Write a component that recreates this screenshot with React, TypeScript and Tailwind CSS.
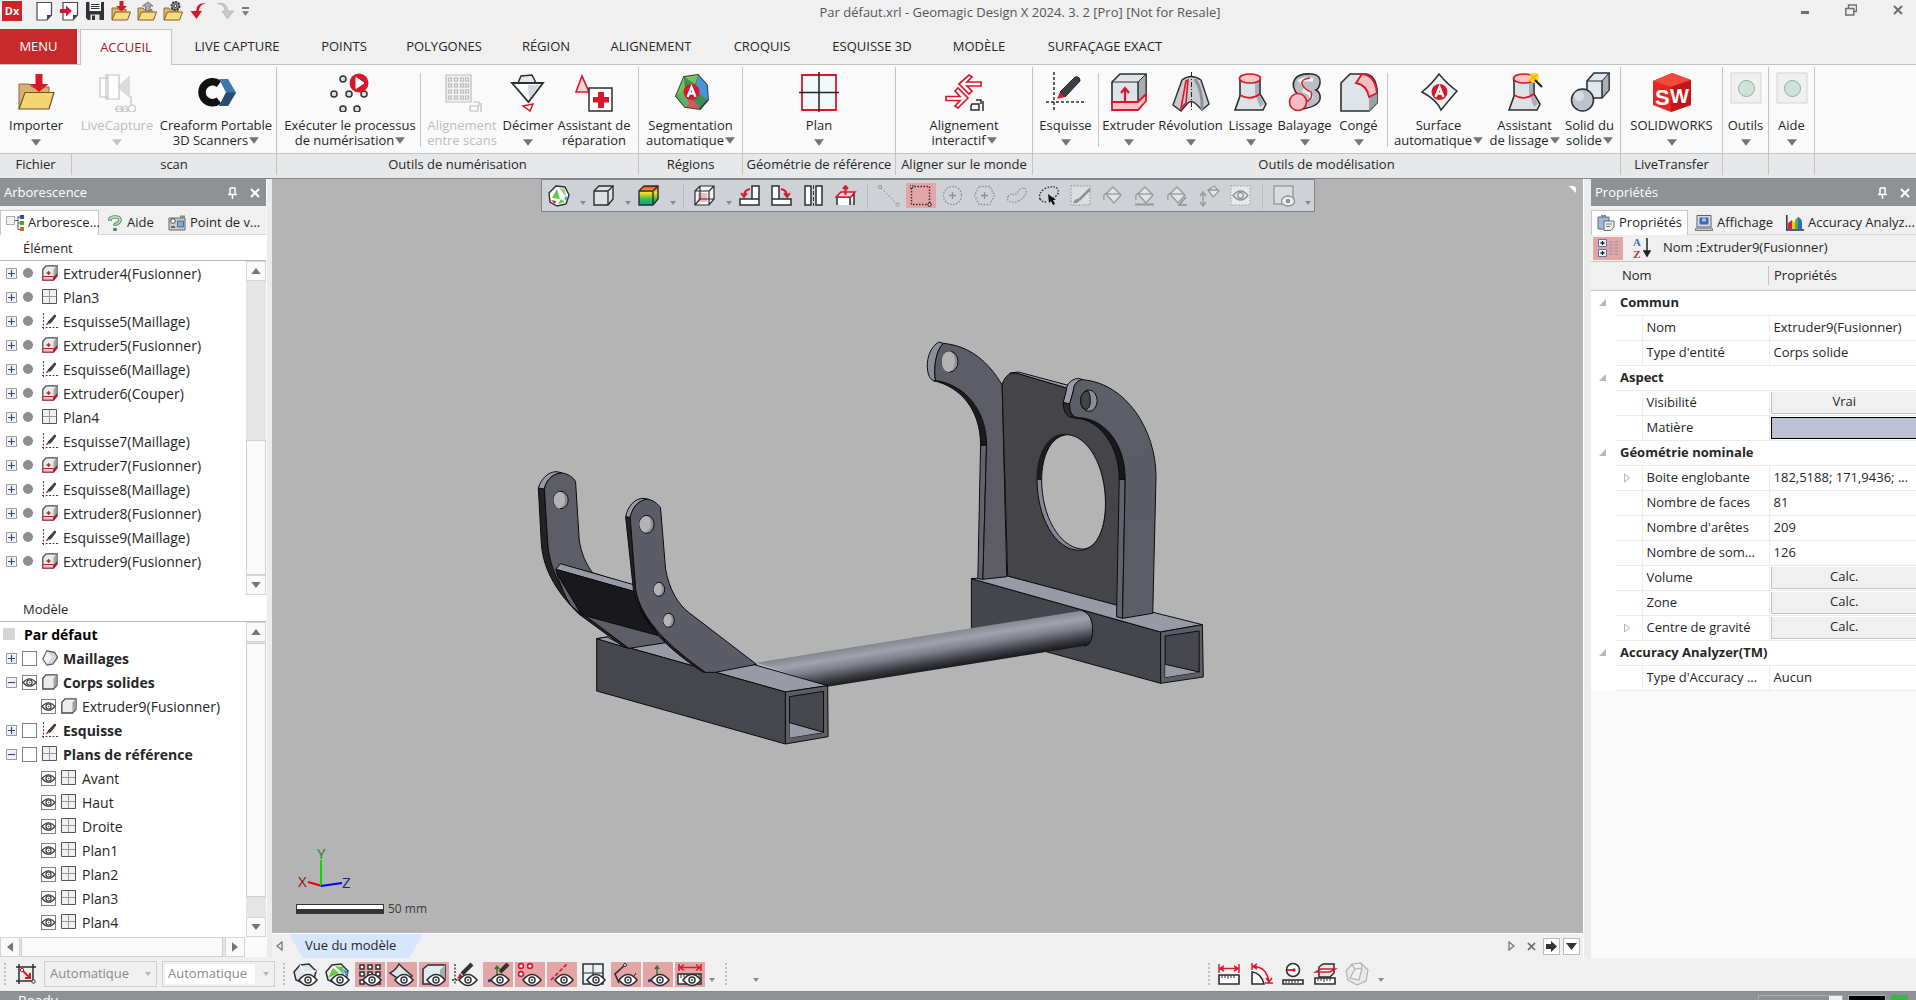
import { useState } from 'react'
import type { ReactNode } from 'react'

const INK = '#2b2e33'
const RED = '#d7182a'

// ---------- small shared pieces ----------

function Svg({ box, className, children }: { box: string; className: string; children: ReactNode }) {
  return (
    <svg viewBox={box} className={`shrink-0 ${className}`} fill="none" aria-hidden="true">
      {children}
    </svg>
  )
}

function Caret({ className = 'h-[7px] w-[11px] text-[#7a7a7a]' }: { className?: string }) {
  return (
    <Svg box="0 0 11 7" className={className}>
      <path d="M0 0h11L5.5 7z" fill="currentColor" />
    </Svg>
  )
}

function Grip() {
  return <span className="h-[22px] border-l-2 border-dotted border-[#c2c2c2]" />
}

// ---------- quick access icons (20x20) ----------

const Folder = () => (
  <>
    <path d="M1 19V7h5l1.5 1.5H15V12" fill="#dcb56c" stroke="#8a6a34" />
    <path d="M1 19 4.5 11H19.5L16.5 19z" fill="#f7dd7c" stroke="#7b5f2c" />
  </>
)

const Page = () => (
  <>
    <path d="M4 1.500H18.5V14L14 19H4z" fill="#fff" stroke="#4a4a4a" strokeWidth="1.2" />
    <path d="M14 19v-5h4.500z" fill="#444" />
  </>
)

const quickIcons: { label: string; icon: ReactNode }[] = [
  { label: 'Nouveau', icon: <Page /> },
  { label: 'Importer un fichier', icon: <><Page /><path d="M1 8h6V4.500l6 5.500-6 5.500V12H1z" fill={RED} /></> },
  {
    label: 'Enregistrer',
    icon: (
      <>
        <path d="M1 1h18v18H3l-2-2z" fill="#2f3237" />
        <path d="M4.500 1h11.500v9H4.500z" fill="#fff" />
        <path d="M6 3.500h8.500M6 5.500h8.500M6 7.500h8.500" stroke="#333" />
        <path d="M5.500 13.500h9V19h-9z" fill="#e4e4e4" />
        <path d="M7 14.500h3V19H7z" fill="#2f3237" />
      </>
    ),
  },
  { label: 'Ouvrir', icon: <><Folder /><path d="M8.500 0h4v5h3.500l-5.500 5.500L5 5h3.500z" fill={RED} /></> },
  { label: 'Exporter', icon: <><Folder /><path d="M8.500 10V5H5.500L11 1l5 4h-3v5z" fill="#a9adb1" stroke="#666" strokeWidth=".8" /></> },
  {
    label: 'Préférences',
    icon: (
      <>
        <Folder />
        <circle cx="12.5" cy="5" r="4" fill="#999" stroke="#333" strokeWidth="2" strokeDasharray="2 1" />
        <circle cx="12.5" cy="5" r="1.5" fill="#fff" stroke="#333" />
      </>
    ),
  },
  { label: 'Annuler', icon: <path d="M17.5 2.500C9 1 7.500 6 7.300 10H1.500l6 8 5.500-8H10c.3-4 2-7 7.500-7.500z" fill={RED} /> },
  { label: 'Rétablir', icon: <path d="M2.500 2.500C11 1 12.500 6 12.700 10h5.800l-6 8L7 10h3C9.700 6 8 3 2.500 2.500z" fill="#c9c9c9" stroke="#aaa" strokeWidth=".6" /> },
]

// ---------- ribbon icons (40x40) ----------

const facets = 'M13 5l14-2 9 10 1 15-8 9-15-2-9-11z'

const icons: Record<string, ReactNode> = {
  importer: (
    <>
      <path d="M3 37V12h10l3 3h17v6" fill="#d9b272" stroke="#8b6b3a" />
      <path d="M3 37 9 20.500h29L33 37z" fill="#f3d671" stroke="#6e5526" strokeWidth="1.2" />
      <path d="M19.500 2h7v10h6L23 20l-9.500-8h6z" fill={RED} />
    </>
  ),
  liveCapture: (
    <g stroke="#c4c4c4" strokeWidth="1.2">
      <path d="M22 13 33 3v23l-11-9z" fill="#dcdcdc" stroke="none" />
      <path d="M3 6h8v19H3zM9 3h13v24H9zM11 3v24" fill="#fff" />
      <path d="M34 24v10M18 37h14" />
      <circle cx="22" cy="37" r="3" /><circle cx="28" cy="37" r="3" /><circle cx="35" cy="36.5" r="3.5" />
    </g>
  ),
  creaform: (
    <>
      <path d="M23 28.500A10.500 10.500 0 1 1 23 12" stroke="#111" strokeWidth="7.5" />
      <path d="M23 7h9l8 13.500-8 13.500h-9l7-13.500z" fill="#3f77b0" />
      <path d="M23 34l7-13.500h10L32 34z" fill="#2a4d73" />
    </>
  ),
  processus: (
    <>
      {[[13, 7], [4, 22], [19, 22], [34, 22], [13, 37], [27, 37]].map(([x, y]) => (
        <circle key={`${x}-${y}`} cx={x} cy={y} r="3" fill="#d9e0e6" stroke="#333" strokeWidth="1.5" />
      ))}
      <circle cx="29" cy="11" r="9.5" fill={RED} />
      <path d="M26 5.500v11l8-5.500z" fill="#fff" stroke="#fff" />
    </>
  ),
  alignScans: (
    <g stroke="#bdbdbd" strokeWidth="1.2">
      <path d="M4 3h25v27H4z" fill="#f2f2f2" />
      {[7, 13, 19, 25].map((y) => [8, 14, 20, 25].map((x) => <rect key={`${x}-${y}`} x={x - 1.5} y={y - 1} width="3" height="3" />))}
      <path d="M28 34h8v5h-8zM31 30h6v4M39 31v9" />
    </g>
  ),
  decimer: (
    <>
      <path d="M10 11 13 4l11-1 4 8z" fill="#e3e9ee" stroke={INK} strokeWidth="1.5" />
      <path d="M4 11h31L20.500 30z" fill="#fff" stroke={INK} strokeWidth="1.8" />
      <path d="M20 13h12L21 27z" fill="#cfd6dc" />
      <path d="m15 34 10-2-3 7z" fill="#fff" stroke={RED} strokeWidth="1.5" />
    </>
  ),
  reparation: (
    <>
      <path d="M8 4 2 20h13z" fill="#f6d5d8" stroke={RED} strokeWidth="1.6" />
      <path d="M15 16h23v23H15z" fill="#fff" stroke={INK} strokeWidth="1.5" />
      <path d="M24 20h6v5h5v5.500h-5V36h-6v-5.500h-5V25h5z" fill={RED} />
    </>
  ),
  segmentation: (
    <>
      <path d={facets} fill="#3f8f55" stroke="#2b3a3a" strokeWidth="1.8" />
      <path d="m27 3 9 10 1 15-13-9z" fill="#4b92d6" />
      <path d="M13 5l14-2-3 9zM5 24l9-6-1-13z" fill="#75c25a" />
      <path d="m14 35 4-13 11 15z" fill="#d45b5b" />
      <path d="m5 24 9-6 4 14-4 3z" fill="#5db36b" />
      <circle cx="20.5" cy="20" r="8" fill={RED} />
      <path d="m16.500 25 4-10 4 10M18 21.500h5" stroke="#fff" strokeWidth="2.3" />
    </>
  ),
  plan: (
    <>
      <path d="M3 3h34v35H3z" fill="#f1f8fc" stroke={RED} strokeWidth="1.8" />
      <path d="M20 0v40M0 20.500h40" stroke="#222" strokeWidth="1.5" />
    </>
  ),
  interactif: (
    <>
      <g fill="#fff" stroke={RED} strokeWidth="1.7">
        <path d="m15 12 10-9 3 2-5 5h14v4H23l5 5-3 3z" />
        <path d="m24 26-10 10-3-2 5-5.500H2v-4h14l-5-5.500 3-3z" />
      </g>
      <path d="M28 32h7v6h-8v-4zM32 28h5v4M39 29v10" stroke={INK} strokeWidth="1.5" />
    </>
  ),
  esquisse: (
    <>
      <path d="M8 0v40M0 30h40" stroke={INK} strokeWidth="1.5" strokeDasharray="3 2" />
      <path d="m14 20 15-15q5-1 5 4L19 25z" fill="#3c3f45" stroke="#222" />
      <path d="m14 20-3 7 8-2z" fill={RED} />
    </>
  ),
  extruder: (
    <>
      <path d="M3 10 11 2h26v22l-8 8H3z" fill="#dfe4e8" stroke={INK} strokeWidth="1.6" />
      <path d="M29 10 37 2v22l-8 8z" fill="#a8aeb5" stroke={INK} />
      <path d="M3 10h26v22" stroke={INK} />
      <path d="M3 30h26l8-8v7l-8 9H3z" fill="#f7c4c8" stroke={RED} strokeWidth="1.8" />
      <path d="M16 29V18m-4 3 4-5 4 5" stroke={RED} strokeWidth="2.2" />
    </>
  ),
  revolution: (
    <>
      <path d="M11 8q9-7 19 0l8 24-7 6-6-6q-5-5-9 0l-6 7-8-6z" fill="#c7ccd1" stroke={INK} strokeWidth="1.4" />
      <path d="m15 9-5 27 5-5 2-23z" fill="#f6c0c4" stroke={RED} strokeWidth="1.6" />
      <path d="M24 7q8 12 7 31" stroke="#8c9197" strokeWidth="3" />
      <path d="M20.500 0v40" stroke="#222" strokeDasharray="5 2 1 2" />
    </>
  ),
  lissage: (
    <>
      <path d="M9 6v18L4 38h28l3-6-6-10V6z" fill="#dde2e6" stroke={INK} strokeWidth="1.6" />
      <path d="M24 8v14l5 13 4-3-5-10V8z" fill="#aab0b6" />
      <ellipse cx="19" cy="6.5" rx="10.5" ry="4.5" fill="#f7c4c8" stroke={RED} strokeWidth="1.7" />
      <path d="M9 23q10 6 20-1" stroke={RED} strokeWidth="1.7" />
    </>
  ),
  balayage: (
    <>
      <path d="M14 24q-9-9-4-17Q14 1 27 2q9 1 8 9-1 6-4 7 5 3 4 9-1 7-17 10z" fill="#b9bec4" stroke={INK} strokeWidth="1.6" />
      <path d="M14 10q5-4 14-2M18 18q9 3 8 8" stroke="#eef1f3" strokeWidth="4" />
      <path d="M25 6q-9 1-8 6 2 5 9 8 3 7-7 11" stroke={RED} strokeWidth="1.3" />
      <circle cx="13" cy="30" r="8.5" fill="#f7bfc3" stroke={RED} strokeWidth="1.6" />
    </>
  ),
  conge: (
    <>
      <path d="M2 11 11 2h16q9 1 11 15v14l-8 8H2z" fill="#dfe5e9" stroke={INK} strokeWidth="1.6" />
      <path d="M30 24 38 17v14l-8 8z" fill="#9ba2a9" />
      <path d="M17 11 23 2q13 1 15 19l-8 4q-2-12-13-14z" fill="#f7bfc3" stroke={RED} strokeWidth="1.8" />
    </>
  ),
  surface: (
    <>
      <path d="M20 2q8 10 18 17-7 8-16 19-4-10-19-18Q13 12 20 2z" fill="#f2f4f6" stroke={INK} strokeWidth="1.5" />
      <circle cx="20.5" cy="20" r="8" fill={RED} />
      <path d="m16.500 25 4-10 4 10M18 21.500h5" stroke="#fff" strokeWidth="2.3" />
    </>
  ),
  solid: (
    <>
      <path d="m17 9 7-8h15v17l-7 8H17z" fill="#e2e7eb" stroke={INK} strokeWidth="1.6" />
      <path d="m32 9 7-8v17l-7 8z" fill="#a9afb5" stroke={INK} />
      <path d="M17 9h15v17" stroke={INK} />
      <circle cx="12.5" cy="28" r="11" fill="#bcc3ca" stroke={INK} strokeWidth="1.5" />
      <circle cx="9" cy="24" r="5" fill="#d9dee2" />
    </>
  ),
  solidworks: (
    <>
      <path d="M20 1 39 8v25L19 40 1 33V9z" fill="#e5281f" />
      <path d="M20 1 39 8 19 15 1 9z" fill="#f04b3e" />
      <path d="M19 15 39 8v25l-20 7z" fill="#c2161b" />
      <text x="3" y="33" fontSize="22" fontWeight="700" fill="#fff" fontFamily="Liberation Sans">S</text>
      <text x="18" y="31" fontSize="20" fontWeight="700" fill="#fff" fontFamily="Liberation Sans">W</text>
    </>
  ),
  bulle: (
    <>
      <path d="M5 1h30v30H5z" fill="#f0f0f0" stroke="#d5d5d5" />
      <circle cx="20.5" cy="16.5" r="8" fill="#cfe3d9" stroke="#86b3a2" />
    </>
  ),
}

icons.assistantLissage = (
  <>
    {icons.lissage}
    <circle cx="29" cy="6" r="5" fill="#ffd92f" />
    <path d="M25 2l8 8m-9-1 9-7" stroke="#f5a800" strokeWidth="1.3" />
    <path d="m30 8 7 7" stroke="#222" strokeWidth="2.2" />
  </>
)

type Tool = { lines: string[]; icon: string; width: string; arrow?: boolean; disabled?: boolean; divider?: boolean }

const ribbon: { title: string; width: string; tools: Tool[] }[] = [
  { title: 'Fichier', width: 'w-[72px]', tools: [{ lines: ['Importer'], icon: 'importer', width: 'w-[72px]', arrow: true }] },
  {
    title: 'scan',
    width: 'w-[205px]',
    tools: [
      { lines: ['LiveCapture'], icon: 'liveCapture', width: 'w-[84px]', arrow: true, disabled: true },
      { lines: ['Creaform Portable', '3D Scanners'], icon: 'creaform', width: 'w-[114px]', arrow: true },
    ],
  },
  {
    title: 'Outils de numérisation',
    width: 'w-[362px]',
    tools: [
      { lines: ['Exécuter le processus', 'de numérisation'], icon: 'processus', width: 'w-[140px]', arrow: true, divider: true },
      { lines: ['Alignement', 'entre scans'], icon: 'alignScans', width: 'w-[82px]', disabled: true },
      { lines: ['Décimer'], icon: 'decimer', width: 'w-[50px]', arrow: true },
      { lines: ['Assistant de', 'réparation'], icon: 'reparation', width: 'w-[82px]' },
    ],
  },
  { title: 'Régions', width: 'w-[104px]', tools: [{ lines: ['Segmentation', 'automatique'], icon: 'segmentation', width: 'w-[100px]', arrow: true }] },
  { title: 'Géométrie de référence', width: 'w-[153px]', tools: [{ lines: ['Plan'], icon: 'plan', width: 'w-[60px]', arrow: true }] },
  { title: 'Aligner sur le monde', width: 'w-[137px]', tools: [{ lines: ['Alignement', 'interactif'], icon: 'interactif', width: 'w-[100px]', arrow: true }] },
  {
    title: 'Outils de modélisation',
    width: 'w-[588px]',
    tools: [
      { lines: ['Esquisse'], icon: 'esquisse', width: 'w-[64px]', arrow: true, divider: true },
      { lines: ['Extruder'], icon: 'extruder', width: 'w-[60px]', arrow: true },
      { lines: ['Révolution'], icon: 'revolution', width: 'w-[64px]', arrow: true },
      { lines: ['Lissage'], icon: 'lissage', width: 'w-[56px]', arrow: true },
      { lines: ['Balayage'], icon: 'balayage', width: 'w-[52px]', arrow: true },
      { lines: ['Congé'], icon: 'conge', width: 'w-[56px]', arrow: true, divider: true },
      { lines: ['Surface', 'automatique'], icon: 'surface', width: 'w-[102px]', arrow: true },
      { lines: ['Assistant', 'de lissage'], icon: 'assistantLissage', width: 'w-[70px]', arrow: true },
      { lines: ['Solid du', 'solide'], icon: 'solid', width: 'w-[60px]', arrow: true },
    ],
  },
  { title: 'LiveTransfer', width: 'w-[102px]', tools: [{ lines: ['SOLIDWORKS'], icon: 'solidworks', width: 'w-[98px]', arrow: true }] },
  { title: '', width: 'w-[46px]', tools: [{ lines: ['Outils'], icon: 'bulle', width: 'w-[45px]', arrow: true }] },
  { title: '', width: 'w-[46px]', tools: [{ lines: ['Aide'], icon: 'bulle', width: 'w-[45px]', arrow: true }] },
]

function RibbonTool({ tool }: { tool: Tool }) {
  const oneLine = tool.lines.length === 1
  return (
    <>
      <button
        disabled={tool.disabled}
        className={`flex shrink-0 flex-col items-center pt-[7px] text-[13px] leading-[15px] whitespace-nowrap ${tool.width} ${
          tool.disabled ? 'text-[#bdbdbd]' : 'text-[#262626]'
        }`}
      >
        <Svg box="0 0 40 40" className="size-10">{icons[tool.icon]}</Svg>
        <span className="mt-[6px]">{tool.lines[0]}</span>
        {oneLine && tool.arrow && <Caret className={`mt-[6px] h-[7px] w-[10px] ${tool.disabled ? 'text-[#c4c4c4]' : 'text-[#757575]'}`} />}
        {!oneLine && (
          <span className="flex items-center gap-px">
            {tool.lines[1]}
            {tool.arrow && <Caret className="h-[7px] w-[10px] text-[#757575]" />}
          </span>
        )}
      </button>
      {tool.divider && <span className="mt-2 h-[74px] w-px shrink-0 bg-[#c6c6c6]" />}
    </>
  )
}

const tabs: [string, string][] = [
  ['LIVE CAPTURE', 'w-[130px]'],
  ['POINTS', 'w-[84px]'],
  ['POLYGONES', 'w-[116px]'],
  ['RÉGION', 'w-[88px]'],
  ['ALIGNEMENT', 'w-[122px]'],
  ['CROQUIS', 'w-[100px]'],
  ['ESQUISSE 3D', 'w-[120px]'],
  ['MODÈLE', 'w-[94px]'],
  ['SURFAÇAGE EXACT', 'w-[158px]'],
]

function Header() {
  return (
    <header className="shrink-0 bg-[#f0f0f0]">
      <div className="flex h-[29px] items-start pt-px">
        <div className="flex items-center pl-[2px]">
          <span className="flex h-5 w-5 items-center justify-center bg-[#c9252b] text-[11px] font-bold text-white">Dx</span>
          <div className="ml-[8px] flex">
            {quickIcons.map((q) => (
              <button key={q.label} aria-label={q.label} className="flex w-[26px] justify-center">
                <Svg box="0 0 20 20" className="size-5">{q.icon}</Svg>
              </button>
            ))}
          </div>
          <button aria-label="Personnaliser" className="ml-[4px] flex flex-col items-center gap-[2px] text-[#777]">
            <span className="h-[2px] w-[7px] bg-current" />
            <Caret className="h-[5px] w-[7px]" />
          </button>
        </div>
        <h1 className="flex-1 pt-[2px] text-center text-[13px] leading-[18px] text-[#555]">
          Par défaut.xrl - Geomagic Design X 2024. 3. 2 [Pro] [Not for Resale]
        </h1>
        <div className="flex w-[125px] justify-end gap-[36px] pr-[13px] text-[#6f6f6f]">
          <button aria-label="Réduire" className="pt-[8px]"><span className="block h-[3px] w-2 bg-current" /></button>
          <button aria-label="Restaurer" className="pt-[3px]">
            <Svg box="0 0 12 12" className="size-3"><path d="M3.500 4V1h8v6.500H9M.8 4.500h8V11h-8z" stroke="currentColor" strokeWidth="1.5" /></Svg>
          </button>
          <button aria-label="Fermer" className="pt-[3px]">
            <Svg box="0 0 10 10" className="size-[10px]"><path d="m1 1 8 8m0-8L1 9" stroke="currentColor" strokeWidth="2" /></Svg>
          </button>
        </div>
      </div>

      <nav className="flex h-[35px] items-stretch text-[13px] text-[#262626]">
        <button className="w-[77px] bg-[#c62a2c] text-white">MENU</button>
        <button className="relative z-10 -mb-px ml-[3px] w-[92px] border border-b-0 border-[#c3c3c3] bg-[#fafafa] text-[#a3201f]">ACCUEIL</button>
        {tabs.map(([name, width]) => (
          <button key={name} className={`${width} whitespace-nowrap`}>{name}</button>
        ))}
      </nav>

      <div className="flex h-[115px] border-t border-b border-t-[#c3c3c3] border-b-[#84888c] bg-linear-to-b from-[#fafafa] from-[88px] to-[#e7e8ea] to-[88px]">
        {ribbon.map((group, i) => (
          <section key={i} className={`flex shrink-0 flex-col ${group.width}`}>
            <div className="flex h-[89px] shrink-0 justify-center border-b border-[#c3c3c3]">
              <div className="flex flex-1 justify-center">
                {group.tools.map((tool) => <RibbonTool key={tool.lines.join()} tool={tool} />)}
              </div>
              <span className="mt-[2px] w-px bg-[#c3c3c3]" />
            </div>
            <div className="flex h-[21px] justify-center">
              <h2 className="flex-1 text-center text-[13px] leading-[21px] whitespace-nowrap text-[#262626]">{group.title}</h2>
              <span className="w-px bg-[#c3c3c3]" />
            </div>
          </section>
        ))}
        <div className="h-[89px] flex-1 border-b border-[#c3c3c3]" />
      </div>
    </header>
  )
}

// ---------- docked panels ----------

function PanelTitle({ children }: { children: string }) {
  return (
    <div className="flex h-[27px] shrink-0 items-center bg-[#8e9295] pt-px pr-[6px] pl-1 text-[13px] text-white">
      <h2 className="flex-1">{children}</h2>
      <button aria-label="Épingler" className="mr-[13px]">
        <Svg box="0 0 9 12" className="h-3 w-[9px]"><path d="M2 1h5v6M2 1v6M0 7.500h9M4.500 8v4" stroke="#fff" strokeWidth="1.5" /></Svg>
      </button>
      <button aria-label="Fermer le panneau">
        <Svg box="0 0 10 10" className="size-[10px]"><path d="m1 1 8 8m0-8L1 9" stroke="#fff" strokeWidth="2" /></Svg>
      </button>
    </div>
  )
}

function ScrollButton({ turn, label }: { turn: string; label: string }) {
  return (
    <button aria-label={label} className="flex size-5 shrink-0 items-center justify-center border border-[#d5d5d5] bg-[#fafafa]">
      <Caret className={`h-[6px] w-[10px] text-[#757575] ${turn}`} />
    </button>
  )
}

const SketchIcon = () => (
  <Svg box="0 0 16 16" className="size-4">
    <path d="M1.500 0v16M0 14.500h16" stroke="#444" strokeDasharray="2 1.5" />
    <path d="m6 9 6.500-7 1.500 1-6 7.500z" fill="#444" stroke="#333" />
    <path d="m5.500 9-2 3.500 3.500-1.500z" fill={RED} />
  </Svg>
)
const PlaneIcon = () => (
  <Svg box="0 0 16 16" className="size-4">
    <path d="M.5.500h14v14H.5z" fill="#f0f0f0" stroke="#555" />
    <path d="M7.500 1v13M1 7.500h13" stroke="#999" />
  </Svg>
)
const solidBody = (
  <>
    <path d="M.8 4.500 4 .8h11V11l-3.500 4H.8z" fill="#ececec" stroke="#4a4a4a" strokeWidth="1.3" />
    <path d="m11.500 4.500 3-3.500v10l-3 3.500z" fill="#a5a5a5" />
  </>
)
const SolidIcon = () => <Svg box="0 0 16 16" className="size-4">{solidBody}</Svg>
const ExtrudeIcon = () => (
  <Svg box="0 0 16 16" className="size-4">
    {solidBody}
    <path d="M.8 11.500h10.700V15H.8z" fill="#f9c3c6" stroke={RED} />
    <path d="M12 11.500 15.200 8v3.500L12 15z" fill="#b0174a" />
    <path d="M6.500 10V6m-2 2h4" stroke={RED} strokeWidth="1.3" />
  </Svg>
)
const MeshIcon = () => (
  <Svg box="0 0 16 16" className="size-4">
    <path d="m5 .8 7.500 1.500 3 5L11 14l-6 1-4.200-6z" fill="#d6d6d6" stroke="#555" strokeWidth="1.2" />
    <path d="M5 1.500 10 7l-5 7-3.500-5z" fill="#f4f4f4" />
  </Svg>
)
const EyeIcon = () => (
  <Svg box="0 0 15 15" className="size-[15px]">
    <path d="M1 7.500Q7.500 0 14 7.500 7.500 15 1 7.500z" fill="#fff" stroke="#444" strokeWidth="1.2" />
    <circle cx="7.5" cy="7.5" r="2.6" stroke="#444" strokeWidth="1.2" />
    <circle cx="7.5" cy="7.5" r=".8" fill="#444" />
  </Svg>
)

function Expander({ open }: { open?: boolean }) {
  return (
    <button aria-label={open ? 'Réduire' : 'Développer'} className="size-[11px] shrink-0">
      <Svg box="0 0 11 11" className="size-[11px]">
        <path d="M.5.500h10v10H.5z" fill="#f3f3f3" stroke="#9a9a9a" />
        <path d={open ? 'M2 5.500h7' : 'M2 5.500h7M5.500 2v7'} stroke="#31499a" strokeWidth="1.2" />
      </Svg>
    </button>
  )
}

function VisibleBox({ label, initial }: { label: string; initial: boolean }) {
  const [visible, setVisible] = useState(initial)
  return (
    <label className="relative size-[15px] shrink-0">
      <input
        type="checkbox"
        aria-label={label}
        checked={visible}
        onChange={() => setVisible(!visible)}
        className="block size-[15px] appearance-none border border-[#7f8088] bg-white"
      />
      {visible && <span className="pointer-events-none absolute inset-0"><EyeIcon /></span>}
    </label>
  )
}

const features = [
  'Extruder4(Fusionner)', 'Plan3', 'Esquisse5(Maillage)', 'Extruder5(Fusionner)', 'Esquisse6(Maillage)',
  'Extruder6(Couper)', 'Plan4', 'Esquisse7(Maillage)', 'Extruder7(Fusionner)', 'Esquisse8(Maillage)',
  'Extruder8(Fusionner)', 'Esquisse9(Maillage)', 'Extruder9(Fusionner)',
]

const featureIcon = (name: string) =>
  name.startsWith('Plan') ? <PlaneIcon /> : name.startsWith('Esquisse') ? <SketchIcon /> : <ExtrudeIcon />

const model: { name: string; icon: ReactNode; open?: boolean; visible: boolean; children?: string[] }[] = [
  { name: 'Maillages', icon: <MeshIcon />, visible: false },
  { name: 'Corps solides', icon: <SolidIcon />, open: true, visible: true, children: ['Extruder9(Fusionner)'] },
  { name: 'Esquisse', icon: <SketchIcon />, visible: false },
  { name: 'Plans de référence', icon: <PlaneIcon />, open: true, visible: false, children: ['Avant', 'Haut', 'Droite', 'Plan1', 'Plan2', 'Plan3', 'Plan4'] },
]

function TreePanel() {
  return (
    <aside className="flex w-[266px] shrink-0 flex-col bg-white text-[14px] text-[#262626]">
      <PanelTitle>Arborescence</PanelTitle>
      <div className="flex h-[29px] shrink-0 items-end bg-[#f0f0f0] text-[13px]">
        <button className="flex h-[25px] w-[99px] items-center gap-1 border border-b-0 border-[#c8c8c8] bg-white pl-[5px] whitespace-nowrap">
          <Svg box="0 0 18 16" className="h-4 w-[18px]">
            <path d="M.5 1.500h8v8h-8z" fill="#f3f3f3" stroke="#aaa" />
            <path d="M9 5.500h3m0-4v13h3M12 8h3M12 2h3" stroke="#555" />
            <path d="M14 0h4v4h-4z" fill="#2656a5" /><path d="M14 6h4v4h-4z" fill="#4ea72a" /><path d="M14 12h4v4h-4z" fill="#cf6a1e" />
          </Svg>
          Arboresce...
        </button>
        <button className="flex h-[24px] w-[63px] items-center gap-[5px] border-b border-[#d8d8d8] pl-[9px]">
          <Svg box="0 0 14 16" className="h-4 w-[14px]">
            <path d="M2 6V4Q3 2 7 2q5 0 5 3 0 2-3 3.500-2 .7-2 2.500M7 13v3" stroke="#4d8a63" strokeWidth="3.6" />
            <path d="M2 5.500V4Q3 2 7 2q5 0 5 3 0 2-3 3.500-2 .7-2 2" stroke="#b8d8c2" strokeWidth="1.8" />
          </Svg>
          Aide
        </button>
        <button className="flex h-[24px] flex-1 items-center gap-1 border-b border-[#d8d8d8] pl-[6px] whitespace-nowrap">
          <Svg box="0 0 18 16" className="h-4 w-[18px]">
            <path d="M1 3h16v12H1z" fill="#c9ccd0" stroke="#666" /><path d="M12 3V.5h5V3" fill="#888" />
            <circle cx="5" cy="6" r="2.3" fill="#fff" stroke="#444" />
            <path d="M9.500 6h6v6h-6z" fill="#79a9e0" stroke="#667" /><path d="M3 12h4" stroke="#444" strokeWidth="1.5" />
          </Svg>
          Point de v...
        </button>
      </div>

      <h3 className="h-[26px] shrink-0 border-b border-[#b9b9b9] pl-[23px] text-[13px] leading-[26px]">Élément</h3>
      <div className="flex h-[334px] shrink-0">
        <ul className="flex-1">
          {features.map((name) => (
            <li key={name} className="flex h-6 items-center pl-[6px]">
              <Expander />
              <span className="ml-[6px] size-[10px] rounded-full bg-[#8f8f8f]" />
              <span className="mr-[5px] ml-[9px]">{featureIcon(name)}</span>
              {name}
            </li>
          ))}
        </ul>
        <div className="flex w-5 flex-col bg-[#e5e5e5]">
          <ScrollButton label="Défiler vers le haut" turn="rotate-180" />
          <div className="flex-1" />
          <div className="h-[135px] border border-[#d0d0d0] bg-[#fafafa]" />
          <ScrollButton label="Défiler vers le bas" turn="" />
        </div>
      </div>

      <h3 className="h-[27px] shrink-0 border-b border-[#b9b9b9] pl-[23px] text-[13px] leading-[28px]">Modèle</h3>
      <div className="flex min-h-0 flex-1">
        <ul className="flex-1">
          <li className="flex h-6 items-center pl-[3px] font-bold text-black">
            <span className="mr-[9px] size-3 bg-[#d4d4d4]" />
            Par défaut
          </li>
          {model.map((node) => (
            <li key={node.name}>
              <div className="flex h-6 items-center pl-[6px] font-bold">
                <Expander open={node.open} />
                <span className="mr-[5px] ml-[5px] flex"><VisibleBox label={node.name} initial={node.visible} /></span>
                <span className="mr-[5px]">{node.icon}</span>
                {node.name}
              </div>
              {node.children && (
                <ul>
                  {node.children.map((child) => (
                    <li key={child} className="flex h-6 items-center gap-[5px] pl-[41px]">
                      <VisibleBox label={child} initial />
                      {node.icon}
                      {child}
                    </li>
                  ))}
                </ul>
              )}
            </li>
          ))}
        </ul>
        <div className="flex w-5 flex-col bg-[#e5e5e5]">
          <ScrollButton label="Défiler vers le haut" turn="rotate-180" />
          <div className="mt-px mb-5 flex-1 border border-[#d0d0d0] bg-[#fafafa]" />
          <ScrollButton label="Défiler vers le bas" turn="" />
        </div>
      </div>
      <div className="flex shrink-0 bg-[#e5e5e5]">
        <ScrollButton label="Défiler à gauche" turn="rotate-90" />
        <div className="mr-[2px] ml-px flex-1 border border-[#d0d0d0] bg-[#fafafa]" />
        <ScrollButton label="Défiler à droite" turn="-rotate-90" />
        <div className="w-[21px] bg-[#fafafa]" />
      </div>
      <div className="h-px shrink-0 bg-[#f0f0f0]" />
    </aside>
  )
}

// ---------- properties ----------

type Row = { name: string; value?: string; kind?: 'button' | 'color'; expandable?: boolean }

const properties: { title: string; rows: Row[] }[] = [
  { title: 'Commun', rows: [{ name: 'Nom', value: 'Extruder9(Fusionner)' }, { name: "Type d'entité", value: 'Corps solide' }] },
  { title: 'Aspect', rows: [{ name: 'Visibilité', value: 'Vrai', kind: 'button' }, { name: 'Matière', kind: 'color' }] },
  {
    title: 'Géométrie nominale',
    rows: [
      { name: 'Boite englobante', value: '182,5188; 171,9436; ...', expandable: true },
      { name: 'Nombre de faces', value: '81' },
      { name: "Nombre d'arêtes", value: '209' },
      { name: 'Nombre de som...', value: '126' },
      { name: 'Volume', value: 'Calc.', kind: 'button' },
      { name: 'Zone', value: 'Calc.', kind: 'button' },
      { name: 'Centre de gravité', value: 'Calc.', kind: 'button', expandable: true },
    ],
  },
  { title: 'Accuracy Analyzer(TM)', rows: [{ name: "Type d'Accuracy ...", value: 'Aucun' }] },
]

function PropertiesPanel() {
  return (
    <aside className="flex w-[325px] shrink-0 flex-col bg-[#fafafa] text-[13px] text-[#262626]">
      <PanelTitle>Propriétés</PanelTitle>
      <div className="flex h-[29px] shrink-0 items-end overflow-hidden bg-[#f0f0f0] whitespace-nowrap">
        <button className="flex h-[25px] w-[97px] shrink-0 items-center gap-1 border border-b-0 border-[#c8c8c8] bg-white pl-[5px]">
          <Svg box="0 0 18 16" className="h-4 w-[18px]">
            <path d="M1 2h11v12H1z" fill="#9db9dc" stroke="#566f92" /><path d="M4 0h5v3H4z" fill="#888" />
            <path d="M7 6h10v6l-3 3.500H7z" fill="#eee" stroke="#666" /><path d="M9 9h6M9 11.500h4" stroke="#777" />
          </Svg>
          Propriétés
        </button>
        <button className="flex h-[24px] w-[91px] shrink-0 items-center gap-1 border-b border-[#d8d8d8] pl-[7px]">
          <Svg box="0 0 18 16" className="h-4 w-[18px]">
            <path d="M2 .5h14v11.500H2z" fill="#d8dbe0" stroke="#5a6475" /><path d="M4.500 2.500h9v7h-9z" fill="#3f67ad" />
            <path d="M7 3.500h4v3H7z" fill="#a9c4ec" /><path d="M1 13h16l1 2.500H0z" fill="#c3c6cb" stroke="#777" />
          </Svg>
          Affichage
        </button>
        <button className="flex h-[24px] flex-1 items-center gap-1 border-b border-[#d8d8d8] pl-[7px]">
          <Svg box="0 0 18 16" className="h-4 w-[18px]">
            <path d="M2 14V8l4-3v9z" fill="#e4202c" /><path d="M6 14V5l3 3v6z" fill="#f6c51d" />
            <path d="M9 14V5l3-3v12z" fill="#58b531" /><path d="M12 14V2l3 2 1 3v7z" fill="#276fc0" />
            <path d="M.8 0v15H18" stroke="#1d2e63" strokeWidth="1.5" />
          </Svg>
          Accuracy Analyz...
        </button>
      </div>
      <div className="flex h-[27px] shrink-0 items-center border-b border-[#c5c5c5] bg-[#f0f0f0] pl-[2px]">
        <button aria-label="Par catégorie" className="flex h-[23px] w-[30px] items-center justify-center bg-[#e3a5a5]">
          <Svg box="0 0 20 18" className="h-[18px] w-5">
            <path d="M.5.500h8v7h-8zM.5 10.500h8v7h-8z" fill="#e8f0fa" stroke="#5d79a3" />
            <path d="M2.500 4h4m-2-2v4M2.500 14h4m-2-2v4" stroke="#222" strokeWidth="1.3" />
            <path d="M11 3h4m1.500 0H20M11 6h4m1.500 0H20M11 9h4m1.500 0H20M11 12h4m1.500 0H20M11 15h4m1.500 0H20" stroke="#8994a6" />
          </Svg>
        </button>
        <button aria-label="Tri alphabétique" className="ml-[10px] flex items-center gap-[2px]">
          <span className="flex flex-col font-['Liberation_Serif',serif] text-[11px] leading-[12px] font-bold">
            <span className="text-[#4a6da8]">A</span>
            <span className="text-[#a8383e]">Z</span>
          </span>
          <Svg box="0 0 8 20" className="h-5 w-2"><path d="M4 0v17M1 13l3 5 3-5z" fill="#222" stroke="#222" strokeWidth="1.5" /></Svg>
        </button>
        <span className="ml-3">Nom :Extruder9(Fusionner)</span>
      </div>

      <table className="w-full table-fixed border-collapse bg-white text-left">
        <colgroup>
          <col className="w-[25px]" />
          <col className="w-[26px]" />
          <col className="w-[127px]" />
          <col />
        </colgroup>
        <thead>
          <tr className="h-[28px] border-b border-[#c5c5c5] bg-[#f0f0f0]">
            <th colSpan={3} className="p-0 font-normal">
              <span className="flex h-[19px] items-center border-r border-[#c5c5c5] pl-[31px]">Nom</span>
            </th>
            <th className="p-0 pl-[5px] font-normal">Propriétés</th>
          </tr>
        </thead>
        {properties.map((group) => (
          <tbody key={group.title}>
            <tr className="h-[25px]">
              <td className="p-0">
                <Svg box="0 0 8 8" className="ml-2 size-[7px]"><path d="M8 0v8H0z" fill="#b8b8b8" /></Svg>
              </td>
              <th colSpan={3} className="border-b border-[#ececec] p-0 pl-1 text-[13px] font-bold">{group.title}</th>
            </tr>
            {group.rows.map((row) => (
              <tr key={row.name} className="h-[25px]">
                <td className="p-0" />
                <td className="border-b border-[#ececec] p-0">
                  {row.expandable && (
                    <Svg box="0 0 6 10" className="ml-2 h-[10px] w-[6px]"><path d="M.5 1v8L5.500 5z" stroke="#b5b5b5" /></Svg>
                  )}
                </td>
                <th className="truncate border border-[#ececec] border-t-0 p-0 pl-1 font-normal">{row.name}</th>
                <td className="overflow-hidden border-b border-[#ececec] p-0">
                  {!row.kind && <span className="block truncate pl-1">{row.value}</span>}
                  {row.kind === 'button' && (
                    <button className="ml-px block h-[22px] w-full border-b border-l border-[#c3c3c3] bg-[#f0f0f0] text-center">{row.value}</button>
                  )}
                  {row.kind === 'color' && (
                    <button aria-label="Couleur de la matière" className="ml-px block h-[22px] w-full border border-black bg-[#bcc0d2]" />
                  )}
                </td>
              </tr>
            ))}
          </tbody>
        ))}
      </table>
    </aside>
  )
}

// ---------- viewport ----------

const CubeArt = ({ fill }: { fill: string }) => (
  <g stroke={INK} strokeWidth="1.4">
    <path d="M1 6 6 1h14v13l-5 6H1z" fill={fill} />
    <path d="M1 6h14v14M15 6l5-5" />
  </g>
)

const Bucket = () => (
  <g stroke="#96999d" strokeWidth="1.3">
    <path d="m4 9 7-7 8 8-7 8z" fill="#e1e3e5" />
    <path d="M4 9h14" />
    <path d="M4 8q-3 1-2 7" />
  </g>
)

type ViewTool = { label: string; icon: ReactNode; menu?: boolean; on?: boolean; sep?: boolean }

const viewTools: ViewTool[] = [
  {
    label: 'Maillage',
    menu: true,
    icon: (
      <>
        <path d="M8 1 17 2 21 10 18 19 9 21 2 17 1 8z" fill="#fff" stroke={INK} strokeWidth="1.4" />
        <path d="M9 4 4 13l8 1z" fill="#63c844" /><path d="m11 3 6 1 1 8z" fill="#8fd46f" /><path d="m10 19 7-2-4-3z" fill="#63c844" />
        <path d="m16 13 3-2-1 5z" fill="#4596dd" /><path d="m3 15 4 4 1-3z" fill={RED} />
      </>
    ),
  },
  { label: 'Corps', menu: true, icon: <CubeArt fill="#dfe2e5" /> },
  {
    label: 'Carte de couleurs',
    menu: true,
    sep: true,
    icon: (
      <>
        <defs>
          <linearGradient id="heat" x1="0" y1="0" x2="0" y2="1">
            <stop offset="0" stopColor="#e33" /><stop offset=".35" stopColor="#fd2" /><stop offset=".7" stopColor="#3b4" /><stop offset="1" stopColor="#0aa" />
          </linearGradient>
        </defs>
        <CubeArt fill="url(#heat)" />
      </>
    ),
  },
  {
    label: 'Point de vue',
    menu: true,
    icon: <><path d="M1 6 6 1h14v13l-5 6H1z" fill="#f4f4f5" /><path d="M4 8h9v9H4z" fill="#f4b9bc" /><path d="M1 6 6 1h14v13l-5 6H1zM1 6h14v14M15 6l5-5M6 1v13h14M6 14l-5 6" stroke={INK} strokeWidth="1.2" /></>,
  },
  { label: 'Rotation à gauche', icon: <><path d="M1 14h19v6H1zM13 1h7v13h-7z" fill="#fff" stroke={INK} strokeWidth="1.5" /><path d="M11 4Q5 5 5 11M2 8l3 4 3-4" stroke={RED} strokeWidth="1.8" /></> },
  { label: 'Rotation à droite', icon: <><path d="M1 14h19v6H1zM1 1h7v13H1z" fill="#fff" stroke={INK} strokeWidth="1.5" /><path d="M10 4q6 1 6 7m-3-3 3 4 3-4" stroke={RED} strokeWidth="1.8" /></> },
  { label: 'Symétrie', icon: <><path d="M2 1h6v19H2zM13 1h6v19h-6z" fill="#fff" stroke={INK} strokeWidth="1.5" /><path d="M10.500 0v21" stroke={INK} strokeDasharray="4 2" /></> },
  { label: 'Normale à', sep: true, icon: <><path d="M2 20v-8h13v8M15 12l4-3v11" fill="#fff" stroke={INK} strokeWidth="1.5" /><path d="m1 12 5-5h14l-4 5z" fill="#fbe0e2" stroke={RED} strokeWidth="1.6" /><path d="M10.500 10V3M8 4l2.500-3L13 4" stroke={RED} strokeWidth="2" /></> },
  { label: 'Ligne', icon: <><path d="m3 3 16 16" stroke="#8d9195" strokeDasharray="2 1.5" /><circle cx="2" cy="2" r="1.5" fill="#eee" stroke="#888" /><circle cx="19.5" cy="19.5" r="1.5" fill="#eee" stroke="#888" /></> },
  { label: 'Rectangle', on: true, icon: <><path d="M1.500 1.500h18v18h-18z" stroke={INK} strokeWidth="1.4" strokeDasharray="1.5 1.5" /><circle cx="1.5" cy="1.5" r="1.7" fill="#ddd" stroke="#111" /><circle cx="19.5" cy="19.5" r="1.7" fill="#ddd" stroke="#111" /></> },
  { label: 'Cercle', icon: <><circle cx="10.5" cy="10.5" r="9" stroke="#8d9195" strokeWidth="1.3" strokeDasharray="1.5 1.5" /><path d="M10.500 7v7M7 10.500h7" stroke="#8d9195" strokeWidth="1.3" /></> },
  { label: 'Polygone', icon: <><path d="M5 1.500h11l4.500 9-4.500 9H5l-4.500-9z" stroke="#8d9195" strokeWidth="1.3" strokeDasharray="1.5 1.5" /><path d="M10.500 7v7M7 10.500h7" stroke="#8d9195" strokeWidth="1.3" /></> },
  { label: 'Forme libre', icon: <path d="M2 12q2-5 6-2 3-1 6-6 6-3 6 3-1 6-6 8-6 4-11 1-3-2-1-4z" stroke="#8d9195" strokeWidth="1.3" strokeDasharray="1.5 1.5" /> },
  { label: 'Lasso', icon: <><path d="M2 14q-2-5 4-10Q14 0 19 3q3 5-1 8-4 4-7 3M2 14q1 3 6 3" stroke={INK} strokeWidth="1.4" strokeDasharray="1.5 1.5" /><path d="m10 9 1 9 2-2 2 4 2-1-2-4h3z" fill="#111" /></> },
  { label: 'Pinceau', icon: <><path d="M1 1h19v19H1z" fill="#dcdfe2" stroke="#8d9195" strokeDasharray="1.5 1.5" /><path d="m20 4-8 8-3 3" stroke="#8d9195" strokeWidth="2.5" /><path d="M3 18q2-5 7-4-1 5-7 4z" fill="#8d9195" /></> },
  { label: 'Remplir', icon: <Bucket /> },
  { label: 'Remplir la région', icon: <><Bucket /><path d="M1 19.500h19" stroke="#96999d" strokeWidth="2" /></> },
  { label: "Remplir par l'angle", icon: <><Bucket /><path d="m20 12-7 8h8" stroke="#8d9195" strokeWidth="1.5" /></> },
  { label: 'Étendre', icon: <><path d="m10 5 6-4 5 5-6 6zM10 5h10" fill="#e3e5e7" stroke="#96999d" strokeWidth="1.3" /><path d="M5 8v12M2 11l3-4 3 4M2 17l3 4 3-4" stroke="#96999d" strokeWidth="1.4" /></> },
  { label: 'Visible seulement', sep: true, icon: <><path d="M1 1h19v19H1z" fill="#e6e8ea" stroke="#9a9ea2" strokeDasharray="1.5 1.5" /><path d="M3 10.500q7.500-9 15 0-7.500 9-15 0z" stroke="#8d9195" strokeWidth="1.3" /><circle cx="10.5" cy="10.5" r="2.8" stroke="#8d9195" strokeWidth="1.3" /></> },
  { label: 'Filtre', menu: true, icon: <><path d="M1 1h19v18H1z" fill="#d9dcdf" stroke="#9a9ea2" strokeWidth="1.5" /><ellipse cx="15" cy="16" rx="6.5" ry="5" fill="#eee" stroke="#8d9195" strokeWidth="1.3" /><circle cx="15" cy="16" r="2.3" fill="#8d9195" /></> },
]

function ViewToolbar() {
  return (
    <div className="absolute top-0 left-[269px] flex h-[33px] items-center border border-[#7d838a] bg-[#ced1d6] px-px">
      {viewTools.map((t) => (
        <div key={t.label} className="flex items-center">
          <button aria-label={t.label} className={`mx-px flex h-[25px] w-[30px] items-center justify-center ${t.on ? 'bg-[#e3a5a5]' : ''}`}>
            <Svg box="0 0 22 22" className="size-[22px]">{t.icon}</Svg>
          </button>
          {t.menu && (
            <button aria-label={`${t.label}, options`} className="flex w-[13px] justify-end pt-[14px] pr-[2px]">
              <Caret className="h-[4px] w-[6px] text-[#858a8f]" />
            </button>
          )}
          {t.sep && <span className="mx-[5px] h-[26px] w-px bg-[#b9bcc0]" />}
        </div>
      ))}
    </div>
  )
}

// Shaded bracket; the inner group scales drawing units to the 720x430 canvas.
function Part() {
  return (
    <svg className="absolute top-[151px] left-[248px]" width="720" height="430" viewBox="0 0 720 430" aria-label="Extruder9">
      <defs>
        <linearGradient id="tube" gradientUnits="userSpaceOnUse" x1="870" y1="919" x2="893" y2="1021">
          <stop offset="0" stopColor="#84868f" />
          <stop offset=".25" stopColor="#a0a2af" />
          <stop offset=".5" stopColor="#7d7f8a" />
          <stop offset=".8" stopColor="#3c3d43" />
          <stop offset="1" stopColor="#1b1b1d" />
        </linearGradient>
        <linearGradient id="arm" x1="0" y1="0" x2="0" y2="1">
          <stop offset="0" stopColor="#5d5e68" />
          <stop offset=".4" stopColor="#5a5d66" />
          <stop offset="1" stopColor="#5c5d67" />
        </linearGradient>
      </defs>
      <g transform="scale(.4592 .33333)" stroke="#0c0c0e" strokeLinejoin="round" className="[&_*]:[vector-effect:non-scaling-stroke]">
        {/* rear beam */}
        <path d="M983 746 1395 906V1060L983 903z" fill="#45464b" />
        <path d="M983 746 1062 738 1486 884 1395 906z" fill="#989aa6" />
        <path d="M1395 906 1486 884 1488 1041 1395 1060z" fill="#5d5d68" />
        <path d="M1405 918 1479 903V1026L1405 1042z" fill="#46474c" />
        <path d="M1405 1042V1003L1479 1026z" fill="#989aa6" stroke="none" />
        <path d="M1405 1003 1479 1026" />

        {/* rear arm, plate and its round opening */}
        <path d="M1003 345 1016 345 1008 748 997 746z" fill="#62636f" />
        <path d="M900 152C960 170 1003 240 1003 345H1016C1016 260 975 165 915 155z" fill="#1c1c1f" />
        <path d="M912 36C895 50 886 80 887 112 888 135 893 147 900 152L905 152C900 120 905 60 922 40z" fill="#8b8d99" />
        <path d="M922 40C980 48 1020 95 1050 165L1060 740 1008 748 1016 345C1016 255 980 175 915 154L905 152C900 120 905 60 922 40z" fill="#5c5d67" />
        <ellipse cx="936" cy="95" rx="18" ry="31" fill="#8b8d99" />
        <path d="M936 64C925 64 918 78 918 95S925 126 934 126C942 122 947 110 947 95S943 68 936 64z" fill="#b3b3b3" stroke="none" />
        <path d="M1050 165C1053 145 1062 130 1078 128L1200 178 1312 300V830L1062 738z" fill="#454549" />
        <path d="M1066 130 1085 126 1205 170 1198 177 1078 128z" fill="#989aa6" />
        <path d="M1185 313C1235 313 1275 410 1275 520 1275 610 1250 661 1218 661 1165 661 1126 560 1126 450 1126 370 1150 313 1185 313z" fill="#858795" />
        <path d="M1126 450C1126 370 1150 313 1185 313L1192 314C1155 320 1136 380 1136 450z" fill="#1d1d20" stroke="none" />
        <path d="M1192 314C1238 318 1275 410 1275 520 1275 610 1250 661 1222 657 1175 650 1136 560 1136 450 1136 380 1155 318 1192 314z" fill="#b4b4b4" />

        {/* right arm */}
        <path d="M1305 448 1318 448 1312 865 1299 860z" fill="#62636f" />
        <path d="M1212 264C1265 272 1305 350 1305 448H1318C1318 350 1280 275 1225 264z" fill="#19191b" />
        <path d="M1216 145C1198 148 1190 165 1190 180L1183 218 1197 222 1205 183C1206 165 1212 150 1226 149z" fill="#989aa6" />
        <path d="M1183 218 1197 222C1197 250 1203 262 1212 264L1200 262C1188 258 1183 240 1183 218z" fill="#2b2b2f" />
        <path d="M1226 149C1320 160 1385 300 1385 440L1378 850 1312 865 1318 448C1318 350 1280 275 1225 264 1205 264 1197 255 1197 222L1205 183C1206 165 1212 150 1226 149z" fill="url(#arm)" />
        <ellipse cx="1239" cy="212" rx="18" ry="32" fill="#8b8d99" />
        <path d="M1237 183C1227 183 1221 195 1221 212S1227 237 1234 238C1240 234 1242 225 1242 212S1240 188 1237 183z" fill="#454549" />

        {/* cross tube */}
        <path d="M515 998 1218 843C1236 840 1247 870 1247 900 1247 930 1240 948 1228 948L670 1070z" fill="url(#tube)" stroke="none" />
        <path d="M1225 842C1240 848 1247 870 1247 900 1247 930 1240 948 1228 948" fill="none" />

        {/* front beam */}
        <path d="M167 926 258 905 670 1067 578 1086z" fill="#989aa6" />
        <path d="M167 926 578 1086V1242L167 1083z" fill="#46474c" />
        <path d="M578 1086 670 1067 671 1220 578 1242z" fill="#5d5d68" />
        <path d="M587 1100 661 1084V1207L587 1223z" fill="#46474c" />
        <path d="M587 1223V1178L661 1207z" fill="#989aa6" stroke="none" />
        <path d="M587 1178 661 1207" />

        {/* back fork arm */}
        <path d="M190 921 225 890 262 904 235 955z" fill="#b4b4b4" stroke="none" />
        <path d="M167 926 190 921 237 955z" fill="#989aa6" />
        <path d="M40 474 53 477 60 632C62 700 85 790 140 855L237 955 225 950 128 852C75 780 48 710 46 630z" fill="#232326" />
        <path d="M40 474C45 448 62 424 80 425L92 429C74 430 58 445 53 477z" fill="#989aa6" />
        <path d="M53 477C58 445 75 430 90 429 105 430 118 445 121 455L129 630C133 670 145 705 158 728L250 770 318 938 237 955 140 855C85 790 62 700 60 632z" fill="#5d5d67" />
        <ellipse cx="89" cy="510" rx="16" ry="26" fill="#8b8d99" />
        <path d="M87 485C79 487 73 497 73 510S80 535 86 536C94 530 98 522 98 510S94 488 87 485z" fill="#b3b3b3" stroke="none" />

        {/* cross bar of the fork */}
        <path d="M88 701 250 765V785L78 718z" fill="#989aa6" />
        <path d="M78 718 250 785 302 917 135 855 82 735z" fill="#19191b" />
        <path d="M80 730 133 852 112 828C98 800 88 765 80 730z" fill="#62636f" />

        {/* front fork arm */}
        <path d="M230 560 240 562 252 778C262 880 320 950 412 1027L398 1026C325 960 262 880 247 780z" fill="#232326" />
        <path d="M230 560C235 528 250 504 270 505L280 508C258 510 245 530 240 562z" fill="#989aa6" />
        <path d="M240 562C245 530 260 509 278 508 292 510 302 525 306 533L317 717C325 780 345 825 370 850L515 1003 425 1027 404 1027C330 955 262 870 252 778z" fill="#5c5c66" />
        <ellipse cx="276" cy="583" rx="16" ry="27" fill="#8b8d99" />
        <path d="M276 557C266 559 260 570 260 583S267 607 272 608C281 602 285 595 285 583S282 560 276 557z" fill="#b3b3b3" stroke="none" />
        <ellipse cx="303" cy="778" rx="12" ry="21" fill="#8b8d99" />
        <path d="M303 758C296 760 291 768 291 778S296 796 300 797C307 792 309 786 309 778S307 761 303 758z" fill="#b3b3b3" stroke="none" />
        <ellipse cx="324" cy="871" rx="12" ry="21" fill="#8b8d99" />
        <path d="M324 851C317 853 312 861 312 871S317 889 321 890C328 885 330 879 330 871S328 854 324 851z" fill="#b3b3b3" stroke="none" />
      </g>
    </svg>
  )
}

function Viewport() {
  return (
    <main className="flex min-w-0 flex-1 flex-col">
      <div className="relative min-h-0 flex-1 overflow-hidden bg-[#b4b4b4]">
        <ViewToolbar />
        <svg className="absolute top-[7px] right-[6px]" width="8" height="8" viewBox="0 0 8 8" aria-hidden="true"><path d="M0 0h5l2 2v5z" fill="#fff" /></svg>
        <Part />
        <div className="absolute bottom-[17px] left-[24px]">
          <svg width="64" height="52" viewBox="0 -6 64 52" fontSize="15" fontFamily="Open Sans" aria-hidden="true">
            <path d="m12 36 14 4" stroke="#e00" strokeWidth="2" />
            <path d="M25 40V14" stroke="#0d0" strokeWidth="2" />
            <path d="m25 40 21-3" stroke="#00e" strokeWidth="2" />
            <text x="2" y="41" fill="#8c1010">X</text>
            <text x="21" y="13" fill="#1c8a1c">Y</text>
            <text x="46" y="42" fill="#2020a0">Z</text>
          </svg>
          <div className="mt-[10px] flex items-center gap-1 text-[12px] leading-[14px] text-[#3a3a3a]">
            <span className="h-[10px] w-[88px] border border-b-[5px] border-[#333] bg-white" />
            50 mm
          </div>
        </div>
      </div>
      <div className="flex h-[25px] shrink-0 items-center border-t border-white bg-[#f0f0f0] pr-[3px] pl-1 text-[13px] text-[#262626]">
        <button aria-label="Onglet précédent"><Svg box="0 0 7 10" className="h-[10px] w-[7px]"><path d="M6 1v8L1 5z" stroke="#777" strokeWidth="1.3" /></Svg></button>
        <button className="ml-[6px] h-6 w-[134px] bg-[#d6e6fd] pl-4 text-left [clip-path:polygon(0_0,100%_0,calc(100%-14px)_100%,14px_100%)]">Vue du modèle</button>
        <div className="flex-1" />
        <button aria-label="Onglet suivant"><Svg box="0 0 7 10" className="h-[10px] w-[7px]"><path d="M1 1v8l5-4z" stroke="#777" strokeWidth="1.3" /></Svg></button>
        <button aria-label="Fermer la vue" className="mr-[7px] ml-3"><Svg box="0 0 9 9" className="size-[9px]"><path d="m1 1 7 7m0-7L1 8" stroke="#666" strokeWidth="1.7" /></Svg></button>
        <button aria-label="Aller à" className="mr-[3px] flex size-[17px] items-center justify-center border border-[#bbb] bg-white"><Svg box="0 0 11 11" className="size-[11px]"><path d="M0 3h5V0l6 5.500L5 11V8H0z" fill="#333" /></Svg></button>
        <button aria-label="Liste des vues" className="flex size-[17px] items-center justify-center border border-[#bbb] bg-white"><Caret className="h-[7px] w-[11px] text-[#333]" /></button>
      </div>
    </main>
  )
}

// ---------- bottom toolbar (30x25 cells) ----------

const EyeMark = () => (
  <>
    <path d="M8 18q9-11 18 0-9 11-18 0z" fill="#fff" stroke={INK} strokeWidth="1.6" />
    <circle cx="17" cy="18" r="3" fill="#fff" stroke={INK} strokeWidth="1.5" />
    <circle cx="17" cy="18" r="1" fill={INK} />
  </>
)

const stone = 'M9 3 18 2 25 9 23 18 14 22 5 18 3 10z'

const visibility: { label: string; on?: boolean; art: ReactNode }[] = [
  { label: 'Maillages', art: <><path d={stone} fill="#dfe8ee" stroke={INK} strokeWidth="1.5" /><path d="m9 3 5 8 11-2" stroke="#fff" strokeWidth="1.5" /></> },
  { label: 'Régions', art: <><path d={stone} fill="#eef4f8" stroke={INK} strokeWidth="1.5" /><path d="m5 16 5-10 6 5z" fill="#67c843" /><path d="m12 4 8 1 1 8z" fill="#67c843" /><path d="m20 7 5 3-1 7z" fill="#3d8ede" /></> },
  { label: 'Nuages de points', on: true, art: [3, 10, 18].map((y) => [5, 13, 21].map((x) => <rect key={`${x}-${y}`} x={x} y={y} width="4" height="4" fill="#fff" stroke={INK} strokeWidth="1.5" />)) },
  { label: 'Corps surfaciques', on: true, art: <path d="m12 2 4 4 9 8-9 6L3 11q6-3 9-9z" fill="#dfe4e8" stroke={INK} strokeWidth="1.5" /> },
  { label: 'Corps solides', on: true, art: <><path d="M4 7 9 3h17v13l-5 6H4z" fill="#e2eaef" stroke={INK} strokeWidth="1.5" /><path d="m21 8 5-5v13l-5 4z" fill="#a3adb5" /></> },
  { label: 'Esquisses', art: <><path d="M4 2v21M1 18h9" stroke={INK} strokeDasharray="2 1.5" strokeWidth="1.3" /><path d="M21 2 11 12" stroke="#333" strokeWidth="4" /><path d="m9 11-3 6 6-2z" fill={RED} /></> },
  { label: 'Esquisses 3D', on: true, art: <><path d="M14 14V5" stroke="#2c7a2c" strokeWidth="1.5" /><path d="m11 7 3-4 3 4z" fill="#2c7a2c" /><path d="m14 17-9 2" stroke="#223a9a" strokeWidth="2.5" /><path d="M25 2 17 10" stroke="#333" strokeWidth="4" /></> },
  { label: 'Points', on: true, art: [[6, 4], [15, 4], [6, 12]].map(([x, y]) => <circle key={`${x}-${y}`} cx={x} cy={y} r="2.4" fill="#fff" stroke={RED} strokeWidth="1.6" />) },
  { label: 'Vecteurs', on: true, art: <path d="M4 18 21 1" stroke={RED} strokeWidth="1.7" strokeDasharray="4 2" /> },
  { label: 'Plans', art: <><path d="M4 2h20v20H4z" fill="#eaf1f6" stroke={INK} strokeWidth="1.5" /><path d="M14 2v20M4 11h20" stroke={INK} /></> },
  { label: 'Polylignes', on: true, art: <><path d="M14 3 4 12l4 9" stroke={INK} strokeWidth="1.6" /><circle cx="14" cy="3" r="1.5" fill="#fff" stroke={INK} /><path d="m23 14 2-3" stroke={INK} /></> },
  { label: 'Repères', on: true, art: <><path d="M14 15V5" stroke="#2c7a2c" strokeWidth="1.5" /><path d="m11 7 3-4 3 4z" fill="#2c7a2c" /><path d="m14 17-9 2" stroke="#223a9a" strokeWidth="2.5" /></> },
  { label: 'Mesures', on: true, art: <><path d="M4 2v7M26 2v7M5 5.500h20M9 2.500 5 5.500l4 3M21 2.500l4 3-4 3" stroke={RED} strokeWidth="1.5" /><path d="M3 12h23v10H3z" fill="#fff" stroke={INK} strokeWidth="1.5" /><path d="M6 12v4m3-4v3m3-3v4m9-4v3m3-3v4" stroke={INK} /></> },
]

const Ruler = ({ y }: { y: number }) => (
  <>
    <path d={`M3 ${y}h20v${22 - y}H3z`} fill="#fff" stroke={INK} strokeWidth="1.6" />
    <path d={`M6 ${y}v3m3-3v3m3-3v4m3-4v3m3-3v3`} stroke={INK} />
  </>
)

const measures: { label: string; art: ReactNode }[] = [
  { label: 'Distance', art: <><Ruler y={13} /><path d="M3 2v9M23 2v9M4 6.500h18M8 4 4 6.500 8 9m10-5 4 2.500L18 9" stroke={RED} strokeWidth="1.5" /></> },
  { label: 'Angle', art: <><path d="M4 22V10q9 1 12 12z" fill="#fff" stroke={INK} strokeWidth="1.6" /><path d="M4 1v7M5 4.500q14 0 16 16M17 21h8M9 2 5 4.500 9 7m9 9 3 4 3-4" stroke={RED} strokeWidth="1.5" /></> },
  { label: 'Rayon', art: <><circle cx="13" cy="8" r="6.5" fill="#fff" stroke={INK} strokeWidth="1.6" /><path d="M7 8h7" stroke={RED} strokeWidth="1.8" /><circle cx="14" cy="8" r="1.7" fill={RED} /><Ruler y={18} /></> },
  { label: 'Section', art: <><path d="M7 5 11 2h11v9l-4 4H7z" fill="#e2e8ec" stroke={INK} strokeWidth="1.5" /><path d="m4 10 5-3h14l-5 3z" fill="#fff" stroke={RED} strokeWidth="1.7" /><Ruler y={16} /></> },
  { label: 'Écart de maillage', art: <path d="M8 2 17 1l7 7-2 11-9 4-9-5-2-9zM8 2l3 5 7-1-1-5M11 7l-5 9 9 2 3-12" fill="#e9e9e9" stroke="#b3b3b3" strokeWidth="1.2" /> },
]

function BottomBar() {
  return (
    <div className="flex h-[33px] shrink-0 items-center bg-[#f0f0f0] pb-px pl-1 text-[13px] text-[#8a8a8a]">
      <Grip />
      <button aria-label="Ajustement" className="mr-[8px] ml-[10px]">
        <Svg box="0 0 20 20" className="size-5">
          <path d="M3 0v20M0 3h20M17 0v17M0 17h17" stroke={INK} strokeWidth="1.5" />
          <path d="m6 6 8 8m0-5v5H9" stroke={RED} strokeWidth="2" /><circle cx="6" cy="6" r="1.7" fill="#fff" stroke={RED} />
          <circle cx="17.5" cy="17.5" r="1.7" fill="#fff" stroke="#222" />
        </Svg>
      </button>
      {['Unité', 'Précision'].map((label, i) => (
        <label key={label} className="relative mr-[5px] flex h-[26px] w-[113px] items-center border border-[#d0d0d0] bg-[#f0f0f0] p-[2px]">
          <select aria-label={label} className={`h-5 w-[90px] appearance-none pl-[3px] ${i ? 'bg-white' : ''}`}>
            <option>Automatique</option>
          </select>
          <span className="pointer-events-none absolute right-[5px]"><Caret className="h-[4px] w-[6px] text-[#b5b5b5]" /></span>
        </label>
      ))}
      <span className="w-[3px]" />
      <Grip />
      <div className="ml-[6px] flex gap-[2px]">
        {visibility.map((v) => (
          <button key={v.label} aria-label={v.label} className={`h-[25px] w-[30px] ${v.on ? 'bg-[#e3a5a5]' : ''}`}>
            <Svg box="0 0 30 25" className="h-[25px] w-[30px]">{v.art}<EyeMark /></Svg>
          </button>
        ))}
      </div>
      <button aria-label="Plus de filtres" className="mt-3 mr-[10px] ml-[4px]"><Caret className="h-[4px] w-[6px]" /></button>
      <Grip />
      <button aria-label="Options" className="mt-3 ml-[26px]"><Caret className="h-[4px] w-[6px]" /></button>
      <div className="flex-1" />
      <div className="flex w-[708px] items-center">
        <Grip />
        <div className="ml-1 flex gap-[2px]">
          {measures.map((m) => (
            <button key={m.label} aria-label={m.label} className="h-[25px] w-[30px]">
              <Svg box="0 0 26 25" className="mx-auto h-[25px] w-[26px]">{m.art}</Svg>
            </button>
          ))}
        </div>
        <button aria-label="Plus de mesures" className="mt-3 ml-[6px]"><Caret className="h-[4px] w-[6px]" /></button>
      </div>
    </div>
  )
}

export default function App() {
  return (
    <div className="flex h-screen flex-col overflow-hidden bg-[#f0f0f0] font-['Open_Sans',sans-serif]">
      <Header />
      <div className="flex min-h-0 flex-1">
        <TreePanel />
        <div className="w-[6px] shrink-0 border-l border-[#fafafa] bg-[#ececec]" />
        <Viewport />
        <div className="w-2 shrink-0 border-l border-white bg-[#ececec]" />
        <PropertiesPanel />
      </div>
      <BottomBar />
      <footer className="flex h-[9px] shrink-0 overflow-hidden border-t border-[#85898c] bg-[#8e9295] pr-2 pl-[18px] text-[14px] leading-[18px] text-white">
        <span>Ready</span>
        <div className="flex-1" />
        <div className="mt-[3px] mr-[5px] flex h-5 w-[85px] justify-end border border-[#a9acae]"><span className="w-[13px] bg-[#f0f0f0]" /></div>
        <div className="mt-[3px] mr-[5px] h-5 w-[38px] border border-[#a9acae] bg-black" />
        <div className="mt-[3px] h-5 w-[17px] bg-[#3bb54a]" />
      </footer>
    </div>
  )
}
